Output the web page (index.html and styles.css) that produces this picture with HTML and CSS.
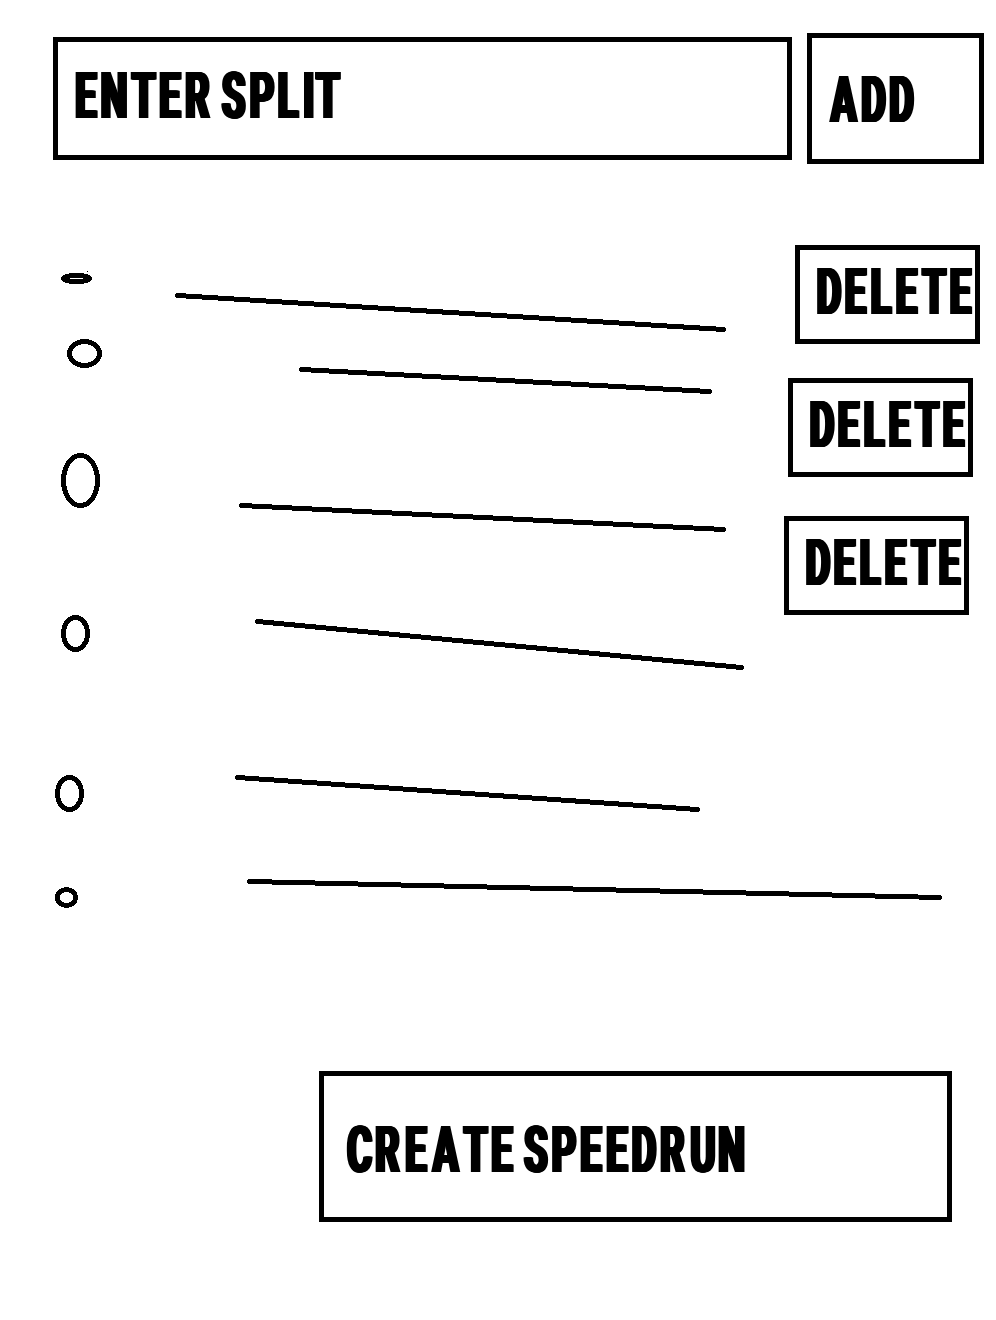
FILE: index.html
```html
<!DOCTYPE html>
<html lang="en">
<head>
<meta charset="utf-8">
<title>Create speedrun</title>
<link rel="stylesheet" href="styles.css">
</head>
<body>
<header class="entry">
  <div class="box box-input"><svg class="label"><text y="76" x="26.7 70.7 124.3 171.6 216.4 253 279.8 327.6 375.9 419.8 442.3">ENTER SPLIT</text></svg></div>
  <div class="box box-add"><svg class="label"><text y="84" x="29.7 81.9 130.2">ADD</text></svg></div>
</header>
<main class="splits">
  <svg class="sketch" viewBox="0 230 996 700">
    <ellipse cx="76.5" cy="278.5" rx="13" ry="3"/>
    <ellipse cx="84.5" cy="353.5" rx="15" ry="12"/>
    <ellipse cx="80.5" cy="480.5" rx="17" ry="25"/>
    <ellipse cx="75.5" cy="633.5" rx="12" ry="16"/>
    <ellipse cx="69.5" cy="793.5" rx="12" ry="16"/>
    <ellipse cx="66.5" cy="897.5" rx="9" ry="8"/>
    <rect class="speck" x="87" y="271" width="1" height="1"/>
    <path d="M177.5 295.5L723.5 329.5M301.5 369.5L709.5 391.5M241.5 505.5L723.5 529.5M257.5 621.5L741.5 667.5M237.5 777.5L697.5 809.5M249.5 881.5L939.5 897.5"/>
  </svg>
  <div class="actions">
    <div class="box box-delete first"><svg class="label"><text y="64" x="25.9 74.1 119 162.1 208 255.2">DELETE</text></svg></div>
    <div class="box box-delete second"><svg class="label"><text y="64" x="25.9 74.1 119 162.1 208 255.2">DELETE</text></svg></div>
    <div class="box box-delete third"><svg class="label"><text y="64" x="25.9 74.1 119 162.1 208 255.2">DELETE</text></svg></div>
  </div>
</main>
<footer class="submit">
  <div class="box box-create"><svg class="label"><text y="96" x="37 85.3 137.1 184.8 238.1 285.3 324 342 389.7 438.8 483.6 527.6 576.7 628.8 676.7">CREATE SPEEDRUN</text></svg></div>
</footer>
</body>
</html>
```
FILE: styles.css
```css
* { box-sizing: border-box; }
body { margin: 0; width: 996px; height: 1320px; background: #fff; overflow: hidden; }
.entry { display: flex; gap: 15px; height: 230px; padding: 33px 0 0 53px; }
.box { border: 5px solid #000; flex: none; }
.box-input { width: 739px; height: 123px; margin-top: 4px; }
.box-add { width: 177px; height: 131px; }
.label { display: block; width: 100%; height: 100%; filter: drop-shadow(1px 0 0 #000) drop-shadow(2px 0 0 #000) drop-shadow(1px 0 0 #000); }
.label text { font: 700 65px Roboto, "Liberation Sans", sans-serif; font-kerning: none; fill: #000; transform: translateX(-.2px) scaleX(.58); }
.splits { display: grid; grid-template: 700px / 996px; }
.sketch { grid-area: 1 / 1; width: 996px; height: 700px; fill: none; stroke: #000; stroke-width: 5; stroke-linecap: round; shape-rendering: crispEdges; }
.sketch .speck { fill: #000; stroke: none; }
.actions { grid-area: 1 / 1; display: flex; flex-direction: column; padding-top: 15px; }
.box-delete { width: 185px; height: 99px; }
.first { margin-left: 795px; }
.second { margin: 34px 0 39px 788px; }
.third { margin-left: 784px; }
.submit { padding: 141px 0 0 319px; }
.box-create { width: 633px; height: 151px; }
```
